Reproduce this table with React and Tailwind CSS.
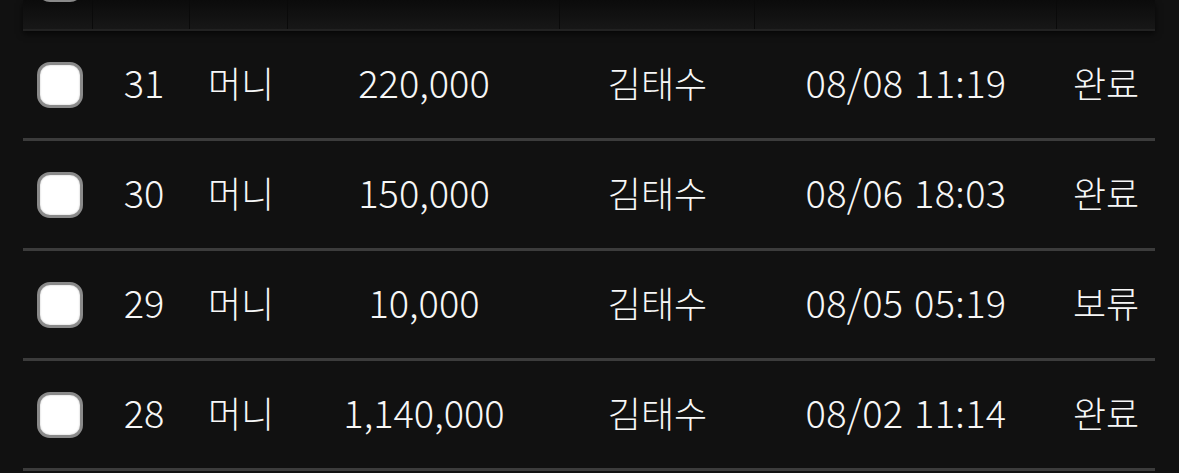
import React from "react";

const rows = [
  { no: "31", type: "머니", amount: "220,000", name: "김태수", date: "08/08 11:19", status: "완료" },
  { no: "30", type: "머니", amount: "150,000", name: "김태수", date: "08/06 18:03", status: "완료" },
  { no: "29", type: "머니", amount: "10,000", name: "김태수", date: "08/05 05:19", status: "보류" },
  { no: "28", type: "머니", amount: "1,140,000", name: "김태수", date: "08/02 11:14", status: "완료" },
];

const cols = "grid grid-cols-[70px_97px_98px_272px_195px_302px_98px]";

function Checkbox() {
  return (
    <div className="w-[46px] h-[46px] rounded-[13px] border-[3px] border-[#8a8a8a] bg-white shadow-[inset_0_0_2px_rgba(0,0,0,0.25)]" />
  );
}

export default function App() {
  return (
    <div
      className="w-[1179px] h-[473px] bg-[#111111] overflow-hidden text-[#f7f7f7]"
      style={{ fontFamily: '"Noto Sans CJK KR", "Noto Sans", sans-serif' }}
    >
      <div className="pl-[23px] w-[1155px]">
        {/* header strip */}
        <div className={`${cols} h-[31px] bg-gradient-to-b from-[#0b0b0b] to-[#171717] border-b-2 border-[#222222] shadow-[0_3px_6px_rgba(0,0,0,0.6)] overflow-hidden relative`}>
          <div className="border-r border-[#0a0a0a] flex justify-center relative">
            <div className="absolute -top-[44px] left-[14px] w-[46px] h-[46px] rounded-[13px] border-[3px] border-[#8a8a8a] bg-[#dcdcdc]" />
          </div>
          <div className="border-r border-[#0a0a0a]" />
          <div className="border-r border-[#0a0a0a]" />
          <div className="border-r border-[#0a0a0a]" />
          <div className="border-r border-[#0a0a0a]" />
          <div className="border-r border-[#0a0a0a]" />
          <div />
        </div>
        {rows.map((r) => (
          <div
            key={r.no}
            className={`${cols} h-[110px] border-b-[3px] border-[#3c3c3c] items-center text-[36px] font-light leading-none`}
          >
            <div className="flex justify-center pl-[3px]">
              <Checkbox />
            </div>
            <div className="text-center text-[38px] pb-[6px] pl-[5px]">{r.no}</div>
            <div className="text-center pb-[5px] pl-[4px]">{r.type}</div>
            <div className="text-center text-[38px] pb-[6px]">{r.amount}</div>
            <div className="text-center pb-[5px]">{r.name}</div>
            <div className="text-center text-[38px] pb-[6px] tracking-[0.3px] [word-spacing:2px]">{r.date}</div>
            <div className="text-center pb-[5px]">{r.status}</div>
          </div>
        ))}
      </div>
    </div>
  );
}
